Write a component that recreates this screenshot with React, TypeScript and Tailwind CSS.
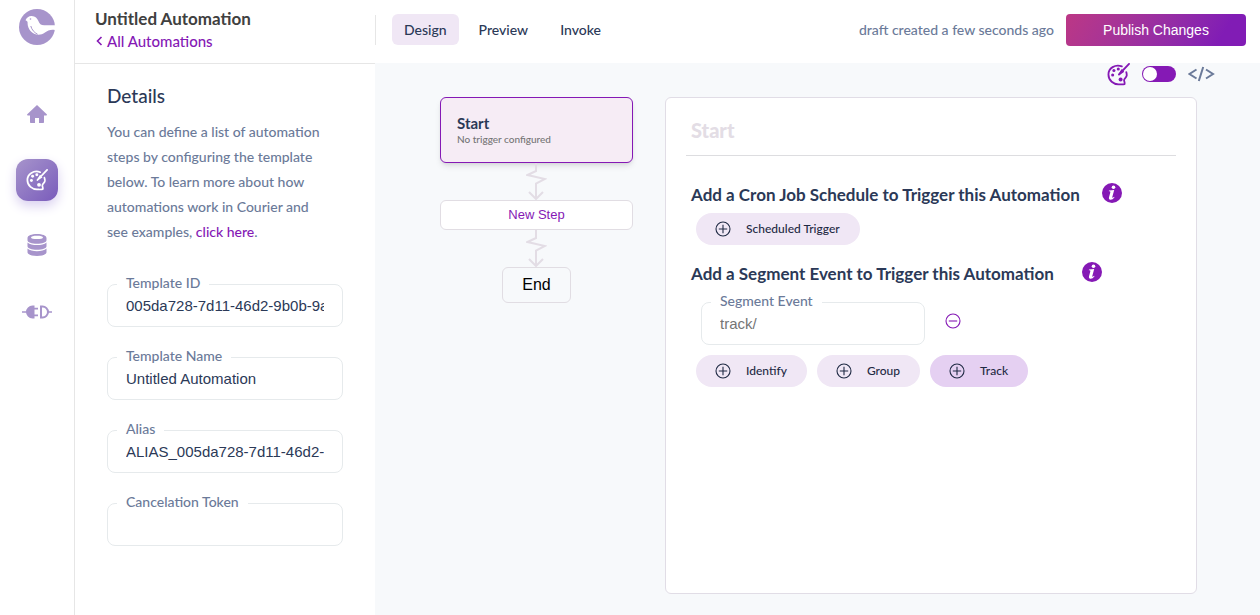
import { useState } from "react";
import type { ReactNode } from "react";

function Logo() {
  return (
    <svg viewBox="0 0 36 36" className="size-9" aria-hidden="true">
      <circle cx="18" cy="18" r="18" fill="#a794cb" />
      <path
        fill="#fff"
        d="M6.500 11.300C7.600 8.300 10 6.700 12.800 6.900c3.400.2 5.600 2.300 6.600 5.100.9 2.700 2.600 4.300 5.800 4.300H37v5l-2.500-.6c-3.400-.3-6.200 1-8.500 2.800-4.800 3.600-11 2.600-14.500-1.500-2-2.400-3.100-5.600-2.900-8.500 0-1-.7-1.700-2.100-2.200z"
      />
      <path fill="none" stroke="#a794cb" strokeWidth="1" d="M11.800 17c1 3.800 3.300 6.400 6.800 8.300" />
      <circle cx="11.500" cy="10" r=".8" fill="#a794cb" />
    </svg>
  );
}

function Palette({ className }: { className: string }) {
  return (
    <svg viewBox="0 0 24 24" className={className} fill="none" stroke="currentColor" strokeWidth="1.900" strokeLinecap="round" strokeLinejoin="round" aria-hidden="true">
      <path d="M15.500 3.500C8.500.8 1.500 5.500 1.500 12c0 6.500 5.500 10.300 10.500 10.300 2.600 0 4.700.3 6.300-.3.600-1.500-.5-2.500-.5-4 0-2 2.500-2.500 2.800-5 .1-1.500-.2-2.500-.5-3.500" />
      <path d="M23 1 12.500 12" />
      <path strokeWidth="1.500" d="M15.500 7.200 13 11.500 17 9" />
      <g fill="currentColor" stroke="none">
        <circle cx="5.900" cy="12.500" r="1.600" />
        <circle cx="7.200" cy="7.900" r="1.600" />
        <circle cx="11.800" cy="6.200" r="1.600" />
        <circle cx="14.200" cy="17.300" r="2.100" />
      </g>
    </svg>
  );
}

function House() {
  return (
    <svg viewBox="0 0 20 18" className="h-[18px] w-5" fill="currentColor" aria-hidden="true">
      <path d="M10 0 20 9.600 19.500 10.500H17V17.200a.8.8 0 0 1-.8.8H12v-5H8v5H3.800a.8.8 0 0 1-.8-.8V10.500H.5L0 9.600z" />
    </svg>
  );
}

function Discs() {
  return (
    <svg viewBox="0 0 20 22" className="h-[22px] w-5" fill="currentColor" aria-hidden="true">
      <path
        fillRule="evenodd"
        d="M.5 4C.5 1.600 4.600 0 10 0s9.500 1.600 9.500 4v2.200C19.500 8.400 15.400 9.800 10 9.800S.5 8.400.5 6.200zM4 3.400c0 1 2.500 1.700 6 1.700s6-.7 6-1.700-2.500-1.600-6-1.600-6 .6-6 1.600z"
      />
      <path d="M.5 8.400C2.500 10.300 6 11.100 10 11.100s7.500-.8 9.500-2.700v3.800c0 2.200-4.100 3.600-9.500 3.600S.5 14.400.5 12.200z" />
      <path d="M.5 14.500C2.500 16.400 6 17.200 10 17.200s7.500-.8 9.500-2.700v3.800c0 2.200-4.100 3.600-9.500 3.600S.5 20.500.5 18.300z" />
    </svg>
  );
}

function Plug() {
  return (
    <svg viewBox="0 0 30 14" className="h-3.5 w-[30px]" aria-hidden="true">
      <path
        fill="currentColor"
        d="M0 6.200h5V7.800H0zM12.500.500v13H10.500A6.500 6.500 0 0 1 10.500.500zM12 2.700h4v1.800h-4zM12 9.500h4v1.800h-4zM25.500 6.200H30v1.600h-4.500z"
      />
      <path fill="none" stroke="currentColor" strokeWidth="2" d="M19 1.500h1.500a5.500 5.500 0 0 1 0 11H19z" />
    </svg>
  );
}

function InfoIcon() {
  return (
    <button type="button" aria-label="More information" className="flex size-5 items-center justify-center rounded-full bg-[#8519b5]">
      <svg viewBox="0 0 20 20" className="size-5" fill="#fff" aria-hidden="true">
        <circle cx="11.500" cy="4.200" r="1.800" />
        <path d="M7 7.600 12.200 7.100 10.300 14.100c-.2.8.2.9 1.800-.4l.4.500c-1.300 1.900-2.900 2.700-4.200 2.500-1.300-.2-1.600-1.100-1.300-2.400l1.300-4.900c.2-.8-.1-1-1.500-1.100z" />
      </svg>
    </button>
  );
}

function CircleSign({ plus }: { plus?: boolean }) {
  return (
    <svg viewBox="0 0 16 16" className="size-4 shrink-0" fill="none" stroke="currentColor" strokeWidth="1.100" aria-hidden="true">
      <circle cx="8" cy="8" r="7" />
      <path d={plus ? "M8 3.800v8.400M3.800 8h8.400" : "M3.800 8h8.400"} />
    </svg>
  );
}

function Arrow() {
  return (
    <svg viewBox="0 0 21 37" className="h-[37px] w-[21px]" fill="none" stroke="#e3dde5" strokeWidth="2" aria-hidden="true">
      <path d="M10 0v8L1.500 12 19 16l-9 4.500V36M3 29l7 7 7-7" />
    </svg>
  );
}

function Field({ id, label, value, placeholder }: { id: string; label: string; value?: string; placeholder?: string }) {
  return (
    <fieldset className="h-[52px] min-w-0 rounded-lg border border-[#e6eaec] px-[9px]">
      <legend className="px-[9px] pb-0.5 text-[14px] leading-4 font-medium text-[#6b7a99]">
        <label htmlFor={id}>{label}</label>
      </legend>
      <input
        id={id}
        defaultValue={value}
        placeholder={placeholder}
        className="block h-[25px] w-full border-x-9 border-transparent bg-transparent font-['Liberation_Sans',sans-serif] text-[15px] text-[#2b3957] outline-none placeholder:text-[#757575]"
      />
    </fieldset>
  );
}

function Pill({ children, active }: { children: ReactNode; active?: boolean }) {
  return (
    <button
      type="button"
      className={`flex h-8 items-center gap-[15px] rounded-full pr-5 pl-[19px] text-[12px] font-medium text-[#1f2a44] ${active ? "bg-[#e5d0f2]" : "bg-[#f0e7f5]"}`}
    >
      <CircleSign plus />
      {children}
    </button>
  );
}

export default function App() {
  const [code, setCode] = useState(false);
  return (
    <div className="flex min-h-screen bg-[#f7f9fb] font-['Lato',sans-serif] text-[14px] font-medium text-[#2b3957]">
      <nav className="flex w-[75px] shrink-0 flex-col items-center border-r border-[#e6e6e6] bg-white pt-[9px] text-[#a794cb]">
        <a href="#home" aria-label="Courier"><Logo /></a>
        <a href="#overview" aria-label="Overview" className="mt-[60px]"><House /></a>
        <a href="#designer" aria-label="Designer" className="mt-9 flex size-[42px] items-center justify-center rounded-xl bg-linear-to-br from-[#a794cb] to-[#7a5bbb] text-white shadow-[0_5px_12px_#d9d0f0]">
          <Palette className="size-[22px]" />
        </a>
        <a href="#data" aria-label="Data" className="mt-[33px]"><Discs /></a>
        <a href="#integrations" aria-label="Integrations" className="mt-[49px]"><Plug /></a>
      </nav>

      <div className="flex min-w-0 grow flex-col">
        <header className="flex h-[63px] shrink-0 bg-white">
          <div className="flex w-[300px] shrink-0 flex-col pt-[7px] pl-5">
            <h1 className="text-[17px] leading-[23px] font-bold text-[#404040]">Untitled Automation</h1>
            <a href="#automations" className="flex items-center gap-1 text-[15px] leading-[22px] text-[#8519b5]">
              <svg viewBox="0 0 8 10" className="h-2.5 w-2" fill="none" stroke="currentColor" strokeWidth="1.600" aria-hidden="true"><path d="M6.500 1 2.500 5l4 4" /></svg>
              All Automations
            </a>
          </div>
          <div className="mt-[15px] h-[30px] w-px bg-[#e6e6e6]" />
          <div className="flex grow items-start pt-3.5 pr-3.5 pl-4">
            <div className="flex gap-2">
              <button type="button" className="h-[31px] rounded-md bg-[#f0e7f5] px-3">Design</button>
              <button type="button" className="h-[31px] px-3">Preview</button>
              <button type="button" className="h-[31px] px-3">Invoke</button>
            </div>
            <span className="ml-auto leading-8 text-[#6b7a99]">draft created a few seconds ago</span>
            <button type="button" className="ml-3 h-8 w-[180px] rounded-sm bg-linear-120 from-[#bc3785] to-[#811cb5] to-85% font-['Liberation_Sans',sans-serif] text-[14px] text-white">
              Publish Changes
            </button>
          </div>
        </header>

        <div className="flex grow">
          <aside className="w-[300px] shrink-0 border-t border-[#e6e6e6] bg-white px-8 pt-5">
            <h2 className="text-[19px] leading-6">Details</h2>
            <p className="mt-[11px] pr-3 leading-[25px] text-[#6b7a99]">
              You can define a list of automation steps by configuring the template below. To learn more about how automations work in Courier and see examples, <a href="#docs" className="text-[#8519b5]">click here</a>.
            </p>
            <form className="mt-[31px] flex flex-col gap-[21px]">
              <Field id="template-id" label="Template ID" value="005da728-7d11-46d2-9b0b-9a41c7d2" />
              <Field id="template-name" label="Template Name" value="Untitled Automation" />
              <Field id="alias" label="Alias" value="ALIAS_005da728-7d11-46d2-9b0b" />
              <Field id="token" label="Cancelation Token" />
            </form>
          </aside>

          <main className="flex min-w-0 grow flex-col">
            <div className="flex h-[34px] items-start justify-end gap-3 pr-[45px] text-[#8519b5]">
              <Palette className="size-[23px]" />
              <button type="button" role="switch" aria-checked={code} aria-label="Code view" onClick={() => setCode(!code)} className="mt-[3px] flex h-4 w-[34px] items-center rounded-full bg-[#8519b5] p-px">
                <span className={`size-3.5 rounded-full bg-white ${code ? "ml-auto" : ""}`} />
              </button>
              <svg viewBox="1 0 27 16" className="mt-[3px] h-4 w-[27px]" fill="none" stroke="#6b7a99" strokeWidth="2" aria-hidden="true">
                <path d="M9.500 3.500 2.500 8l7 4.500M19 3.500 26 8l-7 4.500M16.200 1l-4.400 14" />
              </svg>
            </div>
            <div className="flex items-start gap-8 pr-[63px] pl-[65px]">
              <section className="flex w-[193px] shrink-0 flex-col items-center">
                <div className="h-[66px] w-full rounded-md border border-[#8519b5] bg-[#f6ecf5] px-4 pt-[15px] shadow-md">
                  <h3 className="text-[15px] leading-5 font-bold">Start</h3>
                  <p className="text-[10px] leading-3 text-[#757575]">No trigger configured</p>
                </div>
                <Arrow />
                <button type="button" className="h-[30px] w-full rounded-md border border-[#e1dde3] bg-white font-['Liberation_Sans',sans-serif] text-[13px] text-[#8519b5]">New Step</button>
                <Arrow />
                <div className="flex h-9 w-[69px] items-center justify-center rounded-md border border-[#e1dde3] font-['Liberation_Sans',sans-serif] text-[16px] text-black">End</div>
              </section>

              <section className="h-[497px] grow rounded-md border border-[#e1dde6] bg-white px-5 pt-4">
                <h2 className="border-b border-[#dddde0] px-[5px] pt-1 pb-3 text-[20px] leading-[25px] font-black text-[#e3dde5]">Start</h2>
                <div className="mt-[27px] flex items-start gap-[22px] pl-[5px]">
                  <h3 className="text-[17px] leading-[23px] font-bold">Add a Cron Job Schedule to Trigger this Automation</h3>
                  <InfoIcon />
                </div>
                <div className="mt-[7px] flex pl-2.5"><Pill>Scheduled Trigger</Pill></div>
                <div className="mt-[17px] flex items-start gap-7 pl-[5px]">
                  <h3 className="text-[17px] leading-[23px] font-bold">Add a Segment Event to Trigger this Automation</h3>
                  <InfoIcon />
                </div>
                <div className="mt-2 flex items-center gap-5 pl-[15px]">
                  <div className="w-56"><Field id="segment-event" label="Segment Event" placeholder="track/" /></div>
                  <button type="button" aria-label="Remove segment event" className="pt-1 text-[#8519b5]"><CircleSign /></button>
                </div>
                <div className="mt-2.5 flex gap-2.5 pl-2.5">
                  <Pill>Identify</Pill>
                  <Pill>Group</Pill>
                  <Pill active>Track</Pill>
                </div>
              </section>
            </div>
          </main>
        </div>
      </div>
    </div>
  );
}
